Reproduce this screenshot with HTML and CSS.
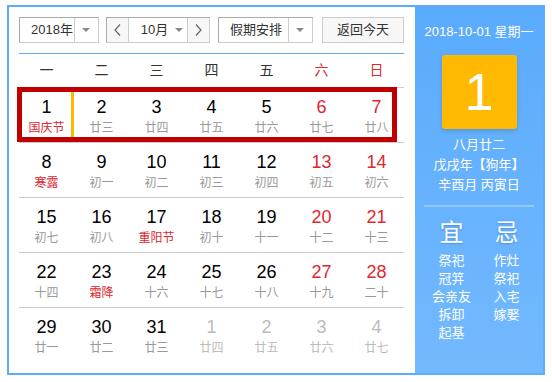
FILE: index.html
```html
<!DOCTYPE html>
<html lang="zh-CN">
<head>
    <meta charset="UTF-8">
    <meta name="viewport" content="width=device-width, initial-scale=1.0">
    <title>万年历</title>
    <link rel="stylesheet" href="styles.css">
</head>
<body>
    <div class="calendar">
        <div class="main">
            <div class="toolbar">
                <div class="select year">
                    <span class="select-text">2018年</span>
                    <span class="select-arrow"><i class="caret"></i></span>
                </div>
                <div class="month-group">
                    <span class="nav-btn"><svg width="7" height="12" viewBox="0 0 7 12"><polyline points="6,0.5 1,6 6,11.5" fill="none" stroke="#666" stroke-width="1.2"/></svg></span>
                    <span class="month-select">10月<i class="caret"></i></span>
                    <span class="nav-btn"><svg width="7" height="12" viewBox="0 0 7 12"><polyline points="1,0.5 6,6 1,11.5" fill="none" stroke="#666" stroke-width="1.2"/></svg></span>
                </div>
                <div class="select holiday">
                    <span class="select-text">假期安排</span>
                    <span class="select-arrow"><i class="caret"></i></span>
                </div>
                <span class="today-btn">返回今天</span>
            </div>

            <div class="weekdays">
                <span>一</span><span>二</span><span>三</span><span>四</span><span>五</span>
                <span class="weekend">六</span><span class="weekend">日</span>
            </div>

            <div class="grid">
                <div class="week">
                    <div class="day selected"><b>1</b><small class="holiday-name">国庆节</small></div>
                    <div class="day"><b>2</b><small>廿三</small></div>
                    <div class="day"><b>3</b><small>廿四</small></div>
                    <div class="day"><b>4</b><small>廿五</small></div>
                    <div class="day"><b>5</b><small>廿六</small></div>
                    <div class="day weekend"><b>6</b><small>廿七</small></div>
                    <div class="day weekend"><b>7</b><small>廿八</small></div>
                </div>
                <div class="week">
                    <div class="day"><b>8</b><small class="holiday-name">寒露</small></div>
                    <div class="day"><b>9</b><small>初一</small></div>
                    <div class="day"><b>10</b><small>初二</small></div>
                    <div class="day"><b>11</b><small>初三</small></div>
                    <div class="day"><b>12</b><small>初四</small></div>
                    <div class="day weekend"><b>13</b><small>初五</small></div>
                    <div class="day weekend"><b>14</b><small>初六</small></div>
                </div>
                <div class="week">
                    <div class="day"><b>15</b><small>初七</small></div>
                    <div class="day"><b>16</b><small>初八</small></div>
                    <div class="day"><b>17</b><small class="holiday-name">重阳节</small></div>
                    <div class="day"><b>18</b><small>初十</small></div>
                    <div class="day"><b>19</b><small>十一</small></div>
                    <div class="day weekend"><b>20</b><small>十二</small></div>
                    <div class="day weekend"><b>21</b><small>十三</small></div>
                </div>
                <div class="week">
                    <div class="day"><b>22</b><small>十四</small></div>
                    <div class="day"><b>23</b><small class="holiday-name">霜降</small></div>
                    <div class="day"><b>24</b><small>十六</small></div>
                    <div class="day"><b>25</b><small>十七</small></div>
                    <div class="day"><b>26</b><small>十八</small></div>
                    <div class="day weekend"><b>27</b><small>十九</small></div>
                    <div class="day weekend"><b>28</b><small>二十</small></div>
                </div>
                <div class="week">
                    <div class="day"><b>29</b><small>廿一</small></div>
                    <div class="day"><b>30</b><small>廿二</small></div>
                    <div class="day"><b>31</b><small>廿三</small></div>
                    <div class="day other"><b>1</b><small>廿四</small></div>
                    <div class="day other"><b>2</b><small>廿五</small></div>
                    <div class="day other"><b>3</b><small>廿六</small></div>
                    <div class="day other"><b>4</b><small>廿七</small></div>
                </div>
                <div class="week-mark"></div>
            </div>
        </div>

        <div class="side">
            <div class="side-date">2018-10-01 星期一</div>
            <div class="side-day">1</div>
            <div class="side-lunar">
                <div>八月廿二</div>
                <div>戊戌年【狗年】</div>
                <div>辛酉月 丙寅日</div>
            </div>
            <div class="side-line"></div>
            <div class="almanac">
                <div class="almanac-col">
                    <div class="almanac-title">宜</div>
                    <div>祭祀</div><div>冠笄</div><div>会亲友</div><div>拆卸</div><div>起基</div>
                </div>
                <div class="almanac-col">
                    <div class="almanac-title">忌</div>
                    <div>作灶</div><div>祭祀</div><div>入宅</div><div>嫁娶</div>
                </div>
            </div>
        </div>
    </div>
</body>
</html>
```

FILE: styles.css
```css
body { margin: 0; font-family: "Liberation Sans", "Noto Sans CJK SC", sans-serif; background: #fff; }
.calendar { display: flex; width: 538px; height: 370px; margin: 5px 0 0 7px; border: 2px solid #5eadfd; box-sizing: border-box; }

/* left part */
.main { width: 406px; padding: 10px 11px 0 10px; box-sizing: border-box; }
.toolbar { display: flex; height: 26px; font-size: 13px; color: #333; }
.select { display: flex; border: 1px solid #aaa; border-right-color: #ccc; border-bottom-color: #ccc; box-sizing: border-box; }
.select-text { padding-left: 11px; line-height: 24px; }
.select-arrow { display: flex; align-items: center; justify-content: center; width: 24px; border-left: 1px solid #ccc; }
.caret { display: inline-block; width: 0; height: 0; border-left: 4px solid transparent; border-right: 4px solid transparent; border-top: 4px solid #888; }
.year { width: 80px; }
.year .select-text { width: 55px; box-sizing: border-box; }
.month-group { display: flex; width: 104px; margin-left: 7px; border: 1px solid #aaa; border-right-color: #ccc; border-bottom-color: #ccc; box-sizing: border-box; }
.nav-btn { display: flex; align-items: center; justify-content: center; width: 21px; background: #f7f7f7; }
.month-select { display: flex; align-items: center; width: 61px; padding-left: 12px; box-sizing: border-box; border-left: 1px solid #ccc; border-right: 1px solid #ccc; line-height: 24px; }
.month-select .caret { margin-left: 7px; }
.holiday { width: 95px; margin-left: 8px; }
.holiday .select-text { width: 70px; box-sizing: border-box; }
.today-btn { width: 82px; margin-left: 9px; border: 1px solid #ccc; background: #f7f7f7; text-align: center; line-height: 24px; box-sizing: border-box; }

.weekdays { display: grid; grid-template-columns: repeat(7, 55px); margin-top: 10px; border-top: 1px solid #5eadfd; height: 33px; line-height: 33px; text-align: center; font-size: 14px; color: #333; }
.weekdays .weekend { color: #e0262e; }

.grid { position: relative; }
.week { display: grid; grid-template-columns: repeat(7, 55px); height: 55px; border-top: 1px solid #ccc; box-sizing: border-box; }
.day { display: flex; flex-direction: column; align-items: center; padding-top: 9px; box-sizing: border-box; }
.day b { font-weight: normal; font-size: 18px; line-height: 20px; height: 20px; color: #000; }
.day small { font-size: 12px; line-height: 16px; height: 16px; margin-top: 3px; color: #999; }
.day small.holiday-name { color: #e0262e; }
.day.weekend b { color: #e0262e; }
.day.other b, .day.other small { color: #bbb; }
.day.selected { box-shadow: inset -3px 0 0 #ffb800; }
.week-mark { position: absolute; left: -2px; top: 0; width: 380px; height: 55px; border: 5px solid #c00000; box-sizing: border-box; pointer-events: none; }

/* right part */
.side { flex: 1; padding-top: 15px; text-align: center; color: #fff; background: linear-gradient(#5aabfd, #73b9fe); }
.side-date { font-size: 13px; line-height: 20px; }
.side-day { width: 75px; height: 74px; margin: 13px auto 0; background: #ffb900; border-radius: 3px; box-shadow: 0 2px 4px rgba(0, 0, 0, 0.15); font-size: 52px; line-height: 74px; }
.side-lunar { margin-top: 6px; font-size: 13px; line-height: 20px; }
.side-line { width: 110px; height: 2px; margin: 10px auto 0; background: rgba(255, 255, 255, 0.3); }
.almanac { display: flex; justify-content: center; font-size: 13px; line-height: 18px; }
.almanac-col { width: 55px; }
.almanac-title { font-size: 24px; line-height: 30px; margin: 11px 0 4px; text-shadow: 0 1px 2px rgba(0, 40, 120, 0.25); }
```
